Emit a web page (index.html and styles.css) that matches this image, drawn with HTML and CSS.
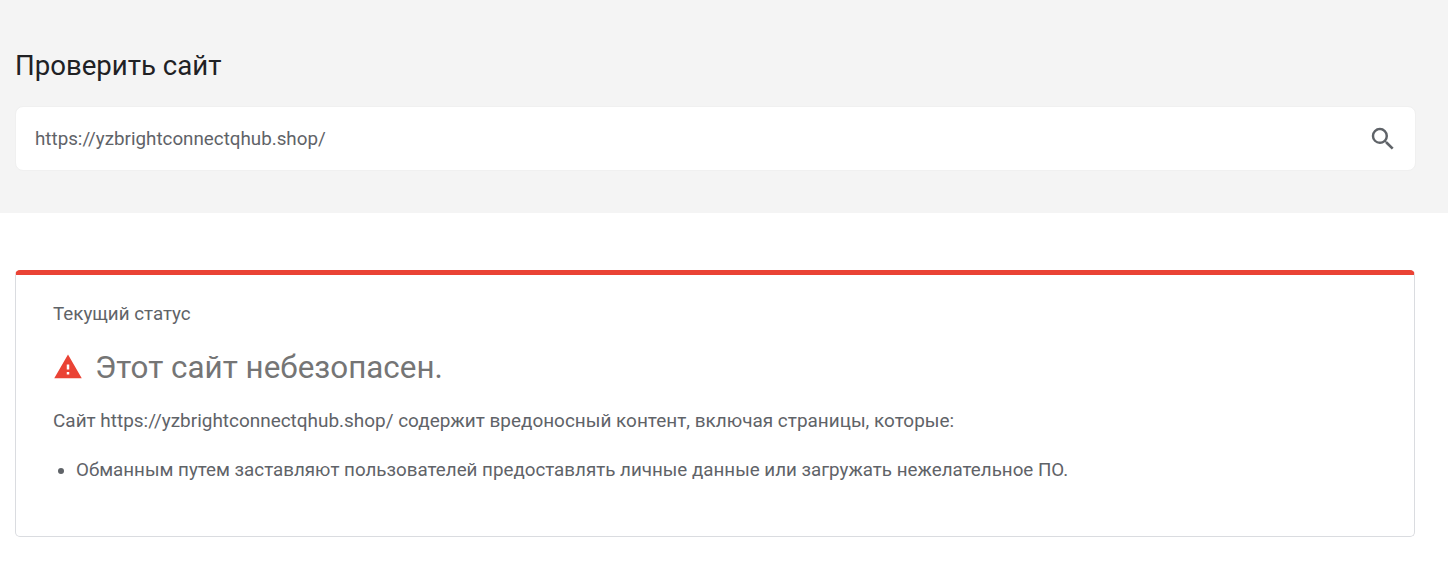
FILE: index.html
```html
<!DOCTYPE html>
<html lang="ru">
<head>
    <meta charset="UTF-8">
    <meta name="viewport" content="width=device-width, initial-scale=1.0">
    <title>Проверить сайт</title>
    <link rel="stylesheet" href="styles.css">
</head>
<body>
    <section class="search-panel">
        <h2 class="search-title">Проверить сайт</h2>
        <div class="search-box">
            <span class="search-url">https://yzbrightconnectqhub.shop/</span>
            <svg class="search-icon" viewBox="0 0 24 24" width="30" height="30">
                <path fill="#5f6368" d="M15.5 14h-.79l-.28-.27A6.47 6.47 0 0 0 16 9.5 6.5 6.5 0 1 0 9.5 16c1.61 0 3.09-.59 4.23-1.57l.27.28v.79l5 4.99L20.49 19l-4.99-5zm-6 0C7.01 14 5 11.99 5 9.5S7.01 5 9.5 5 14 7.01 14 9.5 11.99 14 9.5 14z"/>
            </svg>
        </div>
    </section>

    <section class="status-card">
        <div class="status-label">Текущий статус</div>
        <div class="status-head">
            <svg class="warn-icon" viewBox="0 0 24 24" width="30" height="30">
                <path fill="#ea4335" d="M1 21h22L12 2 1 21zm12-3h-2v-2h2v2zm0-4h-2v-4h2v4z"/>
            </svg>
            <span class="status-text">Этот сайт небезопасен.</span>
        </div>
        <p class="status-desc">Сайт https://yzbrightconnectqhub.shop/ содержит вредоносный контент, включая страницы, которые:</p>
        <ul class="status-list">
            <li>Обманным путем заставляют пользователей предоставлять личные данные или загружать нежелательное ПО.</li>
        </ul>
    </section>
</body>
</html>
```

FILE: styles.css
```css
body {
    margin: 0;
    font-family: Roboto, "Open Sans", sans-serif;
    color: #5f6368;
    background-color: #fff;
}
.search-panel {
    background-color: #f4f4f4;
    height: 213px;
    padding: 0 32px 0 15px;
    box-sizing: border-box;
    overflow: hidden;
}
.search-title {
    margin: 49px 0 23px;
    font-size: 27.6px;
    line-height: 34px;
    font-weight: 400;
    color: #202124;
}
.search-box {
    display: flex;
    align-items: center;
    justify-content: space-between;
    box-sizing: border-box;
    height: 65px;
    padding: 0 17px 0 19px;
    background-color: #fff;
    border: 1px solid #f0f0f0;
    border-radius: 8px;
}
.search-url {
    font-size: 18.8px;
}
.status-card {
    box-sizing: border-box;
    width: 1400px;
    height: 267px;
    margin: 57px 0 0 15px;
    padding: 28px 37px 0;
    border: 1px solid #dadce0;
    border-top: 5px solid #ea4335;
    border-radius: 5px;
}
.status-label {
    font-size: 18.8px;
    line-height: 22px;
}
.status-head {
    display: flex;
    align-items: center;
    gap: 12px;
    margin-top: 23px;
    height: 38px;
}
.status-text {
    font-size: 31.4px;
    color: #757575;
}
.status-desc {
    margin: 23px 0 0;
    font-size: 18.95px;
    line-height: 24px;
}
.status-list {
    margin: 25px 0 0;
    padding-left: 23px;
    font-size: 18.77px;
    line-height: 24px;
}
```
